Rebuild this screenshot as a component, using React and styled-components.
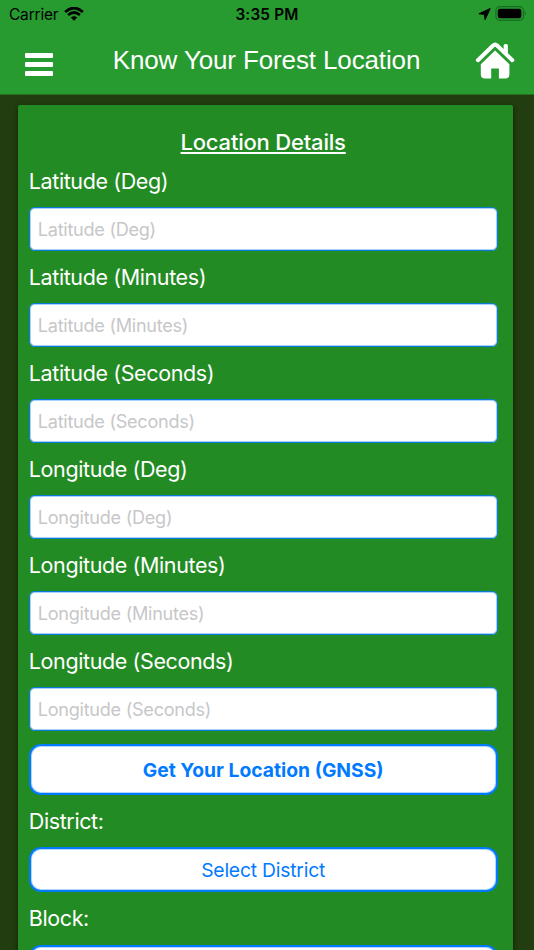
import React from "react";
import styled, { createGlobalStyle } from "styled-components";

const GlobalStyle = createGlobalStyle`
  * {
    box-sizing: border-box;
  }
  body {
    margin: 0;
    background: #223d10;
    font-family: Inter, "Liberation Sans", sans-serif;
  }
`;

const Screen = styled.div`
  height: 950px;
  overflow: hidden;
  background: #223d10;
`;

const Header = styled.header`
  height: 95px;
  background: #279a30;
  border-bottom: 1px solid #256e20;
`;

const StatusBar = styled.div`
  height: 28px;
  padding: 0 7px 0 9px;
  display: grid;
  grid-template-columns: 1fr auto 1fr;
  align-items: center;
  color: #000;
`;

const StatusGroup = styled.div`
  display: flex;
  align-items: center;
  justify-content: ${(props) => props.$align || "flex-start"};
  gap: ${(props) => props.$gap}px;
`;

const Carrier = styled.span`
  font-size: 15.5px;
  letter-spacing: -0.2px;
`;

const Clock = styled.span`
  margin-right: 2px;
  font-size: 15.3px;
  font-weight: 600;
  letter-spacing: 0.2px;
`;

const NavBar = styled.div`
  height: 65px;
  padding: 0 19px 0 25px;
  display: flex;
  align-items: center;
  justify-content: space-between;
`;

const MenuButton = styled.div`
  width: 28px;
  padding-top: 8px;
  display: flex;
  flex-direction: column;
  gap: 4px;
`;

const MenuBar = styled.span`
  height: 5px;
  border-radius: 1px;
  background: #fff;
`;

const Title = styled.h1`
  margin: 0 0 0 5px;
  color: #fff;
  font-family: "Liberation Sans", sans-serif;
  font-size: 26px;
  font-weight: 400;
  letter-spacing: -0.13px;
  white-space: nowrap;
`;

const Card = styled.main`
  height: 900px;
  margin: 10px 21px 0 18px;
  padding: 24px 15.5px 0 10.8px;
  border-radius: 2px;
  background: #238b23;
  box-shadow: 0 2px 5px rgba(0, 0, 0, 0.5);
`;

const CardTitle = styled.h2`
  margin: 0;
  height: 26px;
  color: #fff;
  font-size: 22px;
  font-weight: 500;
  line-height: 27px;
  letter-spacing: -0.2px;
  text-align: center;
  text-decoration: underline;
  text-decoration-thickness: 2px;
  text-underline-offset: 2px;
`;

const Field = styled.div`
  height: 96px;
`;

const Label = styled.label`
  display: block;
  height: ${(props) => props.$height || 52}px;
  padding-top: 13px;
  color: #fff;
  font-size: 21.5px;
  line-height: 27.5px;
  letter-spacing: -0.39px;
`;

const Input = styled.input`
  display: block;
  width: 100%;
  height: 44px;
  padding: 0 8px;
  border: 1px solid #077dd8;
  border-radius: 6px;
  background: #fff;
  box-shadow: inset 0 0 0 1px rgba(0, 122, 255, 0.35);
  font-family: inherit;
  font-size: 18.1px;
  letter-spacing: -0.27px;
  outline: none;

  &::placeholder {
    color: #c7c7c9;
    opacity: 1;
  }
`;

const Button = styled.button`
  display: block;
  width: 100%;
  height: ${(props) => props.$height}px;
  padding: 0;
  border: 2px solid #007aff;
  border-radius: 12px;
  background: #fff;
  box-shadow: inset 0 0 0 1px rgba(0, 122, 255, 0.3);
  color: #007aff;
  font-family: inherit;
  font-size: 19.3px;
  letter-spacing: -0.2px;
`;

const LocateButton = styled(Button)`
  margin-top: 13px;
  font-weight: 700;
  letter-spacing: 0;
`;

const WifiIcon = () => (
  <svg width="20" height="15" viewBox="0 .8 20 15">
    <g fill="none" stroke="#000" strokeWidth="2.7">
      <path d="M1.1 5.7 Q10 -2.1 18.9 5.7" />
      <path d="M4.1 8.9 Q10 3.7 15.9 8.9" />
    </g>
    <path d="M6.8 11.4 Q10 8.7 13.2 11.4 L10 14.6Z" />
  </svg>
);

const LocationIcon = () => (
  <svg width="13" height="13" viewBox="0 .3 13 13">
    <path
      d="M12.2.8 7.1 12 6.3 6.7.9 6.1Z"
      stroke="#000"
      strokeLinejoin="round"
    />
  </svg>
);

const BatteryIcon = () => (
  <svg width="32" height="16" viewBox="0 0 32 16">
    <rect x=".9" y=".7" width="27.6" height="13.6" rx="4" fill="none" stroke="#176d20" strokeWidth="1.2" />
    <rect x="2.8" y="2.7" width="23.6" height="9.6" rx="2.2" />
    <path d="M29.8 5.3Q32 7.5 29.8 9.7Z" fill="#176d20" />
  </svg>
);

const HomeIcon = () => (
  <svg width="40" height="37" viewBox="-.6 0 40 37">
    <path
      d="M2.3 18.2 17.5 3.5Q19.5 1.7 21.5 3.5L36.7 18.2"
      fill="none"
      stroke="#fff"
      strokeWidth="4"
      strokeLinecap="round"
    />
    <path d="M28 8.2V3.6Q28 2 29.7 2H30.4Q32.3 2 32.3 3.6V12Z" fill="#fff" />
    <path
      d="M19.5 8.6 33.8 22.3V32.4Q33.8 36.5 29.6 36.5H23.3V26.6H15.6V36.5H9.5Q5.2 36.5 5.2 32.4V22.3Z"
      fill="#fff"
    />
  </svg>
);

const fields = [
  "Latitude (Deg)",
  "Latitude (Minutes)",
  "Latitude (Seconds)",
  "Longitude (Deg)",
  "Longitude (Minutes)",
  "Longitude (Seconds)",
];

function App() {
  return (
    <Screen>
      <GlobalStyle />
      <Header>
        <StatusBar>
          <StatusGroup $gap={6}>
            <Carrier>Carrier</Carrier>
            <WifiIcon />
          </StatusGroup>
          <Clock>3:35 PM</Clock>
          <StatusGroup $align="flex-end" $gap={4}>
            <LocationIcon />
            <BatteryIcon />
          </StatusGroup>
        </StatusBar>
        <NavBar>
          <MenuButton>
            <MenuBar />
            <MenuBar />
            <MenuBar />
          </MenuButton>
          <Title>Know Your Forest Location</Title>
          <HomeIcon />
        </NavBar>
      </Header>
      <Card>
        <CardTitle>Location Details</CardTitle>
        {fields.map((name) => (
          <Field key={name}>
            <Label>{name}</Label>
            <Input placeholder={name} />
          </Field>
        ))}
        <LocateButton $height={51}>Get Your Location (GNSS)</LocateButton>
        <Label>District:</Label>
        <Button $height={45}>Select District</Button>
        <Label $height={53}>Block:</Label>
        <Button $height={45} />
      </Card>
    </Screen>
  );
}
export default App;
